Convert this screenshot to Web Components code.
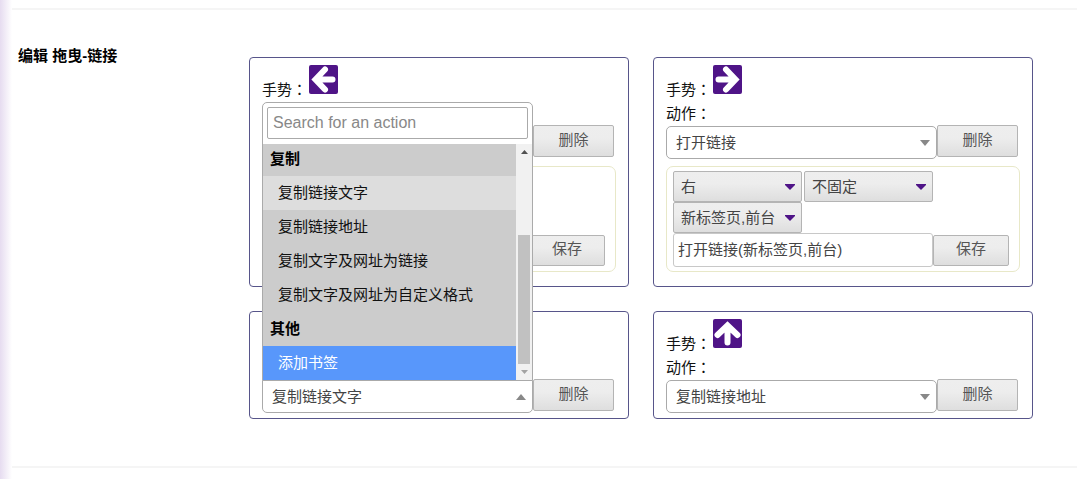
<!DOCTYPE html>
<html lang="zh-CN">
<head>
<meta charset="utf-8">
<title>编辑 拖曳-链接</title>
<style>
  body {
    margin: 0;
    min-height: 100vh;
    color: #111;
    font: 15px/24px "Liberation Sans", "Noto Sans CJK SC", sans-serif;
    background: linear-gradient(to right, #e6dcf0, #fff 12px);
  }
</style>
</head>
<body>
<settings-section heading="编辑 拖曳-链接">
  <gesture-card direction="left" bare>
    <action-options></action-options>
  </gesture-card>
  <gesture-card direction="right" action="打开链接">
    <action-options position="右" pin="不固定" target="新标签页,前台" name="打开链接(新标签页,前台)"></action-options>
  </gesture-card>
  <gesture-card direction="down" action="复制链接文字" open bare>
    <action-menu slot="menu"></action-menu>
  </gesture-card>
  <gesture-card direction="up" action="复制链接地址"></gesture-card>
</settings-section>

<script>
// styles shared by every control
const controls = /* css */`
  * { box-sizing: border-box; }
  button, select, input { margin: 0; font: inherit; color: #444; min-width: 0; width: 100%; }
  button, .grey select {
    border: 1px solid #b4b4b4;
    border-radius: 2px;
    background: linear-gradient(#eee, #ededed 40%, #dedede);
  }
  button { padding: 0 0 2px; height: 32px; color: #555; }
  select { appearance: none; border-radius: 5px; border: 1px solid #aaa; background: #fff; padding: 0 24px 0 9px; }
  /* select and arrow share one grid cell */
  .box { display: grid; align-items: center; }
  .box > * { grid-area: 1 / 1; }
  .box svg { justify-self: end; margin-right: 7px; pointer-events: none; }
`;

class SettingsSection extends HTMLElement {
  constructor() {
    super();
    this.attachShadow({ mode: "open" });
  }

  connectedCallback() {
    this.shadowRoot.innerHTML = /* html */`
      <style>
        :host { display: block; padding-top: 8px; }
        hr { margin: 0 3px 0 12px; border: 0; height: 2px; background: #f5f5f5; }
        section {
          display: grid;
          grid-template-columns: 231px minmax(0, 1fr);
          padding: 34px 47px 47px 18px;
        }
        h2 { margin: 0; font-size: 15px; line-height: 24px; color: #000; }
        .cards {
          display: grid;
          grid-template-columns: repeat(2, minmax(0, 1fr));
          gap: 24px;
          padding-top: 13px;
        }
      </style>
      <hr>
      <section>
        <h2>${this.getAttribute("heading")}</h2>
        <div class="cards"><slot></slot></div>
      </section>
      <hr>
    `;
  }
}

class GestureIcon extends HTMLElement {
  constructor() {
    super();
    this.attachShadow({ mode: "open" });
  }

  connectedCallback() {
    const angle = { left: 0, up: 90, right: 180, down: 270 }[this.getAttribute("direction")];
    this.shadowRoot.innerHTML = /* html */`
      <style>
        :host { display: block; width: 29px; height: 29px; }
        svg { display: block; }
      </style>
      <svg width="29" height="29" viewBox="0 0 29 29">
        <rect width="29" height="29" rx="2" fill="#4f1487"/>
        <path d="M16 4.500 6.500 14.500 16 24.500M7 14.500h16.500" transform="rotate(${angle} 14.5 14.5)"
          fill="none" stroke="#fff" stroke-width="6" stroke-linecap="round" stroke-linejoin="miter"/>
      </svg>
    `;
  }
}

class GestureCard extends HTMLElement {
  constructor() {
    super();
    this.attachShadow({ mode: "open" });
  }

  get isOpen() { return this.hasAttribute("open"); }
  // a bare card has its labels under the open menu of its neighbour
  get isBare() { return this.hasAttribute("bare"); }

  render() {
    const action = this.getAttribute("action") ?? "";
    const direction = this.getAttribute("direction");
    const gesture = this.isOpen ? "" : `
      <span>手势<span class="colon" lang="zh-TW">：</span></span>
      <gesture-icon direction="${direction}"></gesture-icon>`;
    this.shadowRoot.innerHTML = /* html */`
      <style>
        ${controls}
        :host {
          display: block;
          box-sizing: border-box;
          border: 1px solid #57558a;
          border-radius: 4px;
          padding: 7px 12px 5px;
          background: #fff;
        }
        .gesture { display: flex; height: 37px; gap: 2px; }
        .gesture > span { align-self: flex-end; }
        .label { display: block; height: 23px; line-height: 23px; }
        .colon { font-family: "Noto Sans CJK TC", sans-serif; line-height: 1; }
        .action {
          display: grid;
          grid-template-columns: minmax(0, 1fr) 81px;
          height: 34px;
          margin-right: 2px;
        }
        .box { position: relative; align-self: end; }
        .box select { height: 33px; }
        :host([open]) select { border-radius: 0 0 5px 5px; }
        ::slotted([slot="menu"]) { position: absolute; z-index: 1; left: 0; right: 0; bottom: 32px; }
      </style>
      <div class="gesture">${gesture}</div>
      <label class="label" for="action">${this.isBare ? "" : '动作<span class="colon" lang="zh-TW">：</span>'}</label>
      <div class="action">
        <div class="box">
          <select id="action"><option>${action}</option></select>
          <svg width="10" height="6"><path d="${this.isOpen ? "M0 6h10L5 0z" : "M0 0h10L5 6z"}" fill="#888"/></svg>
          <slot name="menu"></slot>
        </div>
        <button type="button">删除</button>
      </div>
      <slot></slot>
    `;
  }

  connectedCallback() { this.render(); }
}

class ActionOptions extends HTMLElement {
  constructor() {
    super();
    this.attachShadow({ mode: "open" });
  }

  select(name, label) {
    return /* html */`
      <div class="box grey">
        <select aria-label="${label}"><option>${this.getAttribute(name) ?? ""}</option></select>
        <svg width="10" height="6"><path d="M0 0h10v1L5 6 0 1z" fill="#4f1487"/></svg>
      </div>`;
  }

  connectedCallback() {
    this.shadowRoot.innerHTML = /* html */`
      <style>
        ${controls}
        :host {
          display: block;
          box-sizing: border-box;
          margin: 7px 0 9px;
          padding: 4px 10px 4px 6px;
          border: 1px solid #e8e8c8;
          border-radius: 7px;
        }
        .row { display: grid; grid-template-columns: minmax(0, 1fr) 76px; align-items: center; }
        .selects { display: grid; grid-template-columns: 1fr 1fr; column-gap: 2px; }
        .grey select { height: 31px; padding: 0 20px 0 7px; border-radius: 2px; }
        input { height: 34px; padding: 0 4px 4px; border: 1px solid #c8c8c8; border-radius: 3px; }
        .row button { height: 31px; }
      </style>
      <div class="row">
        <div class="selects">
          ${this.select("position", "位置")}
          ${this.select("pin", "固定")}
          ${this.select("target", "打开方式")}
        </div>
      </div>
      <div class="row">
        <input type="text" aria-label="名称" value="${this.getAttribute("name") ?? ""}">
        <button type="button">保存</button>
      </div>
    `;
  }
}

const menuItems = [
  { group: "复制" },
  { text: "复制链接文字", state: "selected" },
  { text: "复制链接地址" },
  { text: "复制文字及网址为链接" },
  { text: "复制文字及网址为自定义格式" },
  { group: "其他" },
  { text: "添加书签", state: "active" },
];

class ActionMenu extends HTMLElement {
  constructor() {
    super();
    this.attachShadow({ mode: "open" });
  }

  connectedCallback() {
    const items = menuItems.map(item => item.group
      ? `<li class="group" role="presentation">${item.group}</li>`
      : `<li class="${item.state ?? ""}" role="option">${item.text}</li>`).join("");
    this.shadowRoot.innerHTML = /* html */`
      <style>
        * { box-sizing: border-box; }
        :host {
          display: block;
          box-sizing: border-box;
          border: 1px solid #aaa;
          border-radius: 5px 5px 0 0;
          background: #fff;
        }
        .search { padding: 4px 4px 5px; }
        input {
          display: block;
          width: 100%;
          height: 32px;
          padding: 0 5px;
          border: 1px solid #aaa;
          border-radius: 2px;
          font: inherit;
          font-size: 16px;
        }
        input::placeholder { color: #888; }
        .list { display: flex; height: 236px; }
        /* scrolled to its end */
        ul {
          flex: 1;
          display: flex;
          flex-direction: column;
          justify-content: flex-end;
          overflow: hidden;
          margin: 0;
          padding: 0;
          list-style: none;
          background: #ccc;
        }
        li { flex: none; height: 34px; line-height: 34px; padding-left: 15px; }
        .group { padding-left: 7px; font-weight: bold; color: #000; }
        .selected { background: #ddd; }
        .active { background: #5897fb; color: #fff; }
        .scrollbar {
          width: 16px;
          display: flex;
          flex-direction: column;
          align-items: center;
          justify-content: space-between;
          padding: 6px 0;
          background: #f1f1f1;
        }
        .thumb { width: 12px; height: 129px; margin: auto 0 6px; background: #c1c1c1; }
      </style>
      <div class="search"><input type="text" placeholder="Search for an action" aria-label="Search for an action"></div>
      <div class="list">
        <ul role="listbox">${items}</ul>
        <div class="scrollbar">
          <svg width="7" height="4"><path d="M0 4h7L3.500 0z" fill="#505050"/></svg>
          <div class="thumb"></div>
          <svg width="7" height="4"><path d="M0 0h7L3.500 4z" fill="#a3a3a3"/></svg>
        </div>
      </div>
    `;
  }
}

customElements.define("settings-section", SettingsSection);
customElements.define("gesture-icon", GestureIcon);
customElements.define("gesture-card", GestureCard);
customElements.define("action-options", ActionOptions);
customElements.define("action-menu", ActionMenu);
</script>
</body>
</html>
